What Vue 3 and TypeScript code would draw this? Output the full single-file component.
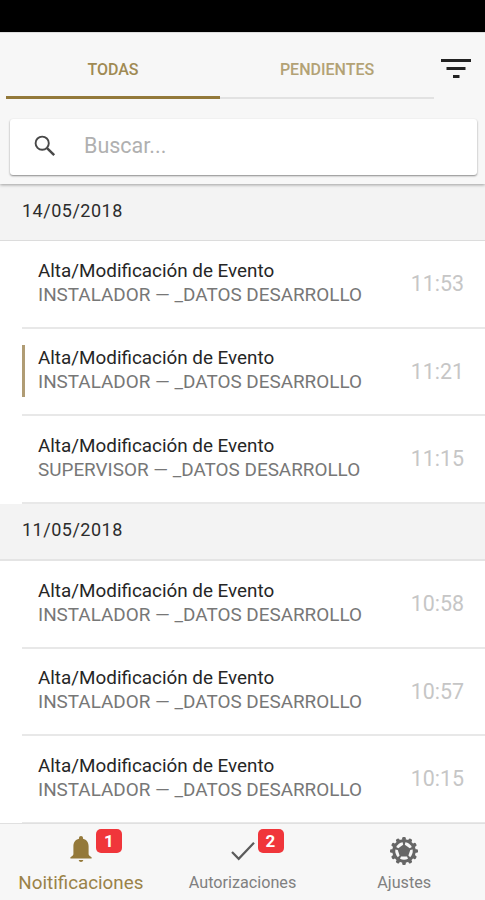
<script setup lang="ts">
interface Notice {
  detail: string
  time: string
  marked?: boolean
}
interface Day {
  date: string
  items: Notice[]
}

const title = 'Alta/Modificación de Evento'
const installer = 'INSTALADOR — _DATOS DESARROLLO'
const supervisor = 'SUPERVISOR — _DATOS DESARROLLO'

const days: Day[] = [
  {
    date: '14/05/2018',
    items: [
      { detail: installer, time: '11:53' },
      { detail: installer, time: '11:21', marked: true },
      { detail: supervisor, time: '11:15' },
    ],
  },
  {
    date: '11/05/2018',
    items: [
      { detail: installer, time: '10:58' },
      { detail: installer, time: '10:57' },
      { detail: installer, time: '10:15' },
    ],
  },
]

const teeth = Array.from({ length: 12 }, (_, i) => i * 30)
const holes = Array.from({ length: 5 }, (_, i) => i * 72)
</script>

<template>
  <div class="screen">
    <div class="status"></div>
    <header class="header">
      <nav class="tabs">
        <button class="tab active">TODAS</button>
        <button class="tab">PENDIENTES</button>
        <button class="filter" aria-label="Filtrar">
          <svg width="30" height="20" viewBox="0 0 30 20" fill="#222">
            <rect x="0" y="0" width="30" height="3" />
            <rect x="5.5" y="8" width="19" height="3" />
            <rect x="12" y="16" width="6.5" height="3" />
          </svg>
        </button>
      </nav>
      <div class="search">
        <svg class="glass" width="22" height="22" viewBox="0 0 22 22" fill="none" stroke="#484848">
          <circle cx="8.2" cy="8.2" r="6.6" stroke-width="1.9" />
          <path d="M12.8 12.8 L20.2 20.2" stroke-width="2.5" />
        </svg>
        <span>Buscar...</span>
      </div>
    </header>

    <main class="list">
      <section v-for="day in days" :key="day.date">
        <h2 class="date"><span>{{ day.date }}</span></h2>
        <article v-for="item in day.items" :key="item.time" class="row">
          <i class="mark" :class="{ on: item.marked }"></i>
          <div class="copy">
            <p class="title"><span>{{ title }}</span></p>
            <p class="detail"><span>{{ item.detail }}</span></p>
          </div>
          <time>{{ item.time }}</time>
        </article>
      </section>
    </main>

    <footer class="footer">
      <div class="item current">
        <div class="icon">
          <svg width="22" height="26" viewBox="0 0 22 26" fill="#94793a">
            <path d="M11 0 C12.2 0 13 .8 13 2 V2.8 C16.8 3.8 18.6 6.7 18.6 10.5 V18 C18.6 19.5 20 20.2 21.6 21.2 V22.4 H.4 V21.2 C2 20.2 3.4 19.5 3.4 18 V10.5 C3.4 6.7 5.2 3.8 9 2.8 V2 C9 .8 9.8 0 11 0 Z" />
            <path d="M8.7 24 H13.3 C13 25.3 12.2 26 11 26 C9.8 26 9 25.3 8.7 24 Z" />
          </svg>
          <b class="badge">1</b>
        </div>
        <span class="label">Noitificaciones</span>
      </div>
      <div class="item">
        <div class="icon">
          <svg class="check" width="24" height="20" viewBox="0 0 24 20" fill="none" stroke="#5b5b5b" stroke-width="2.2">
            <path d="M1 10 L7.7 16.8 L23 .8" />
          </svg>
          <b class="badge">2</b>
        </div>
        <span class="label">Autorizaciones</span>
      </div>
      <div class="item">
        <div class="icon">
          <svg class="gear" width="28" height="28" viewBox="-14 -14 28 28">
            <g fill="#666">
              <circle r="11.7" />
              <rect v-for="a in teeth" :key="a" x="-1.8" y="-14" width="3.6" height="5" rx="1.3" :transform="`rotate(${a})`" />
            </g>
            <g fill="#f7f7f7">
              <path v-for="a in holes" :key="a" d="M-3 5.6 H3 L4 7.8 Q0 9.7 -4 7.8 Z" :transform="`rotate(${a})`" />
            </g>
          </svg>
        </div>
        <span class="label">Ajustes</span>
      </div>
    </footer>
  </div>
</template>

<style>
body {
  margin: 0;
  background: #fff;
}
</style>

<style scoped>
.screen {
  width: 485px;
  height: 900px;
  overflow: hidden;
  display: flex;
  flex-direction: column;
  background: #fff;
  font-family: Roboto, "Liberation Sans", sans-serif;
}
.status {
  height: 32px;
  flex: none;
  background: #000;
}
.header {
  height: 152px;
  flex: none;
  box-sizing: border-box;
  background: #f7f7f7;
  border-top: 1px solid #ddd;
  box-shadow: 0 1px 3px rgba(0, 0, 0, 0.35);
  z-index: 1;
}
.tabs {
  display: flex;
  height: 66px;
  padding-left: 6px;
}
button {
  border: 0;
  padding: 0;
  background: none;
  font: inherit;
}
.tab {
  width: 214px;
  box-sizing: border-box;
  padding-top: 8px;
  border-bottom: 2px solid #e2e2e2;
  color: #b3a275;
  font-size: 16px;
  font-weight: 500;
}
.tab.active {
  padding-top: 9px;
  border-bottom: 3px solid #93793a;
  color: #a08a53;
}
.filter {
  display: flex;
  align-items: center;
  padding: 6px 0 0 7px;
}
.search {
  display: flex;
  align-items: center;
  height: 56px;
  box-sizing: border-box;
  padding-bottom: 3px;
  margin: 20px 8px 0 10px;
  border-radius: 3px;
  background: #fff;
  box-shadow: 0 1px 2px rgba(0, 0, 0, 0.45);
  color: #b0b0b0;
  font-size: 21.5px;
}
.glass {
  margin: 1px 28px 0 24px;
}
.date {
  display: flex;
  align-items: center;
  height: 57px;
  box-sizing: border-box;
  margin: 0;
  padding: 0 0 3px 22px;
  border-bottom: 1px solid #dcdcdc;
  background: #f3f3f3;
  color: #2c2c2c;
  font-size: 18px;
  font-weight: 400;
  letter-spacing: 0.5px;
}
section + section .date {
  height: 57.5px;
  border-bottom-width: 2px;
  border-bottom-color: #e4e4e4;
}
.row {
  display: flex;
  align-items: center;
  height: 87.5px;
  box-sizing: border-box;
  margin-left: 22px;
  padding-right: 21px;
  border-bottom: 2px solid #e8e8e8;
}
.mark {
  width: 3px;
  height: 52px;
  margin: 0 13px 1px 0;
}
.mark.on {
  background: #b09c74;
}
.copy {
  flex: 1;
  padding-bottom: 2px;
}
.copy p {
  margin: 0;
  height: 24px;
  line-height: 24px;
  white-space: nowrap;
}
.title {
  color: #262626;
  font-size: 18.85px;
}
.detail {
  color: #777;
  font-size: 18.9px;
}
time {
  color: #c6c6c6;
  font-size: 21.4px;
}
.footer {
  display: flex;
  flex: none;
  height: 77px;
  box-sizing: border-box;
  margin-top: -0.5px;
  padding-top: 1px;
  border-top: 1px solid #e0e0e0;
  background: #f7f7f7;
  color: #808080;
  z-index: 1;
}
.item {
  width: 161.7px;
  display: flex;
  flex-direction: column;
  align-items: center;
}
.icon {
  position: relative;
  display: flex;
  justify-content: center;
  height: 46px;
  padding-top: 11px;
  box-sizing: border-box;
}
.check {
  margin-top: 6px;
}
.gear {
  margin-top: 1px;
}
.badge {
  position: absolute;
  top: 4px;
  left: calc(50% + 15px);
  width: 26px;
  height: 24px;
  border-radius: 5px;
  background: #f0363b;
  color: #fff;
  font-size: 17px;
  line-height: 24px;
  text-align: center;
}
.label {
  font-size: 16.2px;
  line-height: 24px;
}
.current .label {
  color: #9a8248;
  font-size: 18.8px;
}
</style>
